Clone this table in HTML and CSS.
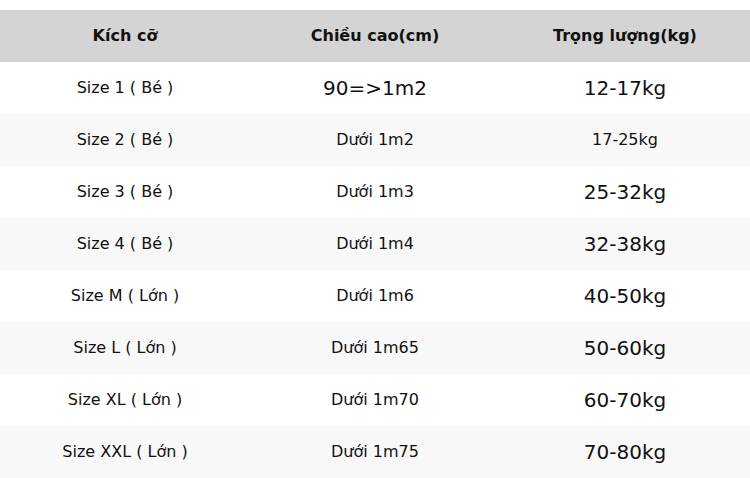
FILE: index.html
```html
<!DOCTYPE html>
<html lang="vi">
<head>
<meta charset="utf-8">
<link rel="stylesheet" href="styles.css">
</head>
<body>
<table class="size-table">
  <thead>
    <tr><th>Kích cỡ</th><th>Chiều cao(cm)</th><th>Trọng lượng(kg)</th></tr>
  </thead>
  <tbody>
    <tr><td>Size 1 ( Bé )</td><td class="big">90=&gt;1m2</td><td class="big">12-17kg</td></tr>
    <tr><td>Size 2 ( Bé )</td><td>Dưới 1m2</td><td>17-25kg</td></tr>
    <tr><td>Size 3 ( Bé )</td><td>Dưới 1m3</td><td class="big">25-32kg</td></tr>
    <tr><td>Size 4 ( Bé )</td><td>Dưới 1m4</td><td class="big">32-38kg</td></tr>
    <tr><td>Size M ( Lớn )</td><td>Dưới 1m6</td><td class="big">40-50kg</td></tr>
    <tr><td>Size L ( Lớn )</td><td>Dưới 1m65</td><td class="big">50-60kg</td></tr>
    <tr><td>Size XL ( Lớn )</td><td>Dưới 1m70</td><td class="big">60-70kg</td></tr>
    <tr><td>Size XXL ( Lớn )</td><td>Dưới 1m75</td><td class="big">70-80kg</td></tr>
  </tbody>
</table>
</body>
</html>
```
FILE: styles.css
```css
html, body {
  margin: 0;
  padding: 0;
  background: #ffffff;
}
body {
  padding-top: 10px;
  font-family: "DejaVu Sans", sans-serif;
  color: #111;
}
.size-table {
  width: 750px;
  border-collapse: collapse;
  table-layout: fixed;
}
.size-table th,
.size-table td {
  box-sizing: border-box;
  height: 52px;
  padding: 0 0 2px 0;
  text-align: center;
  vertical-align: middle;
}
.size-table th {
  background: #d4d4d4;
  font-size: 16px;
  font-weight: bold;
}
.size-table td {
  font-size: 16px;
}
.size-table td.big {
  font-size: 20px;
  padding: 0;
}
.size-table tbody tr:nth-child(even) td {
  background: #f8f8f8;
}
```
